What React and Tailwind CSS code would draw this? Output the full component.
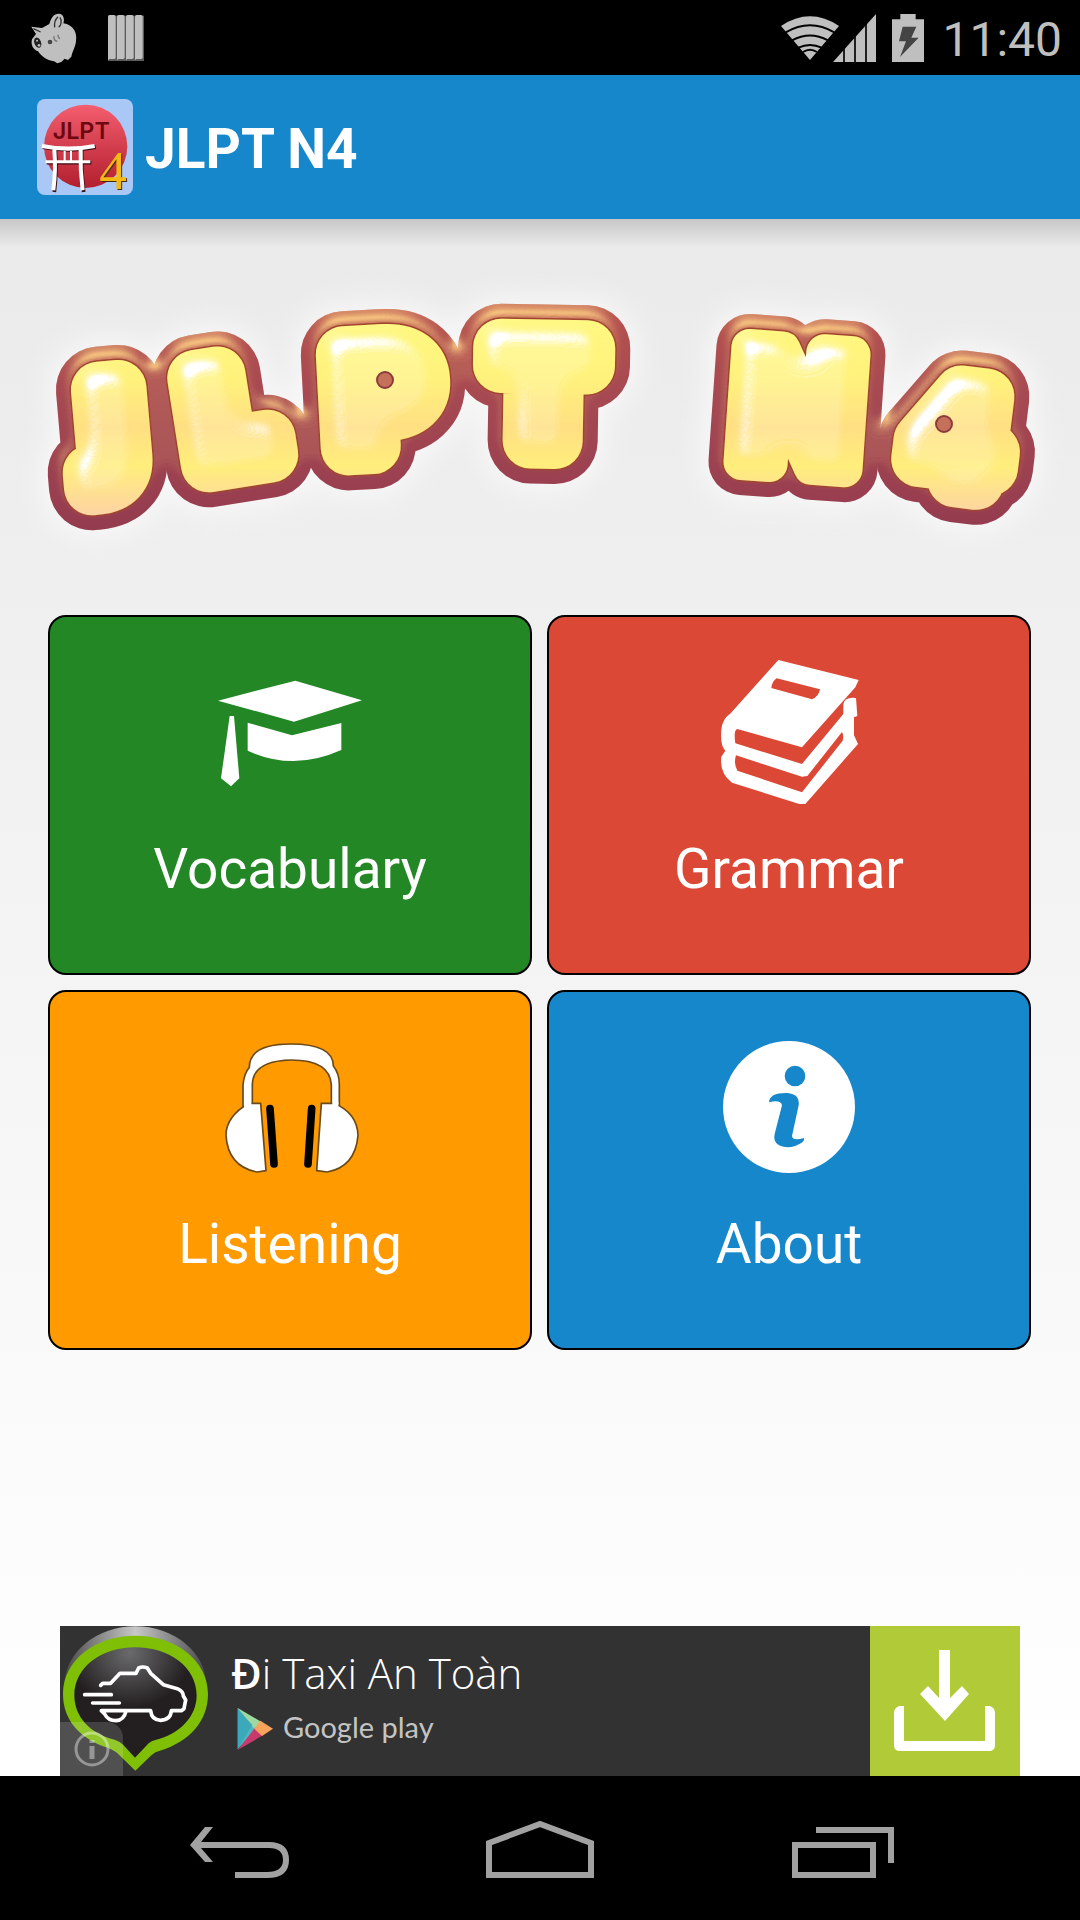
const StatusBar = () => (
  <div className="flex items-center h-[75px] px-[18px] bg-black text-[#bfbfbf]">
    <div className="flex items-center gap-[30px] pl-3">
      {/* Pig */}
      <svg className="w-12 h-[52px]" viewBox="92 34 144 156" fill="#bfbfbf">
        <path d="M96 78 L128 82 L150 70 C156 50 164 38 180 39 C194 42 196 56 192 68 C222 72 234 96 230 122 C228 140 220 150 216 168 L206 178 L196 174 L186 184 L174 188 L164 182 C142 180 126 166 116 152 C100 146 94 132 98 116 L110 100 Z" />
        <path d="M176 48 C168 56 164 68 166 80 M182 50 C188 60 186 74 178 80 M102 84 L124 94" fill="none" stroke="#333" strokeWidth="4" />
        <ellipse cx="115" cy="126" rx="10" ry="16" fill="#222" transform="rotate(-20 115 126)" />
        <circle cx="113" cy="120" r="3" />
        <circle cx="119" cy="134" r="4" />
        <circle cx="152" cy="124" r="7" fill="#444" />
        <path d="M164 106 Q162 120 174 122 M176 102 Q176 112 182 114" fill="none" stroke="#777" strokeWidth="4" />
      </svg>
      {/* Bars */}
      <svg className="w-9 h-[46px]" viewBox="324 45 108 138">
        {[324, 351, 378, 405].map((x) => (
          <g key={x}>
            <rect x={x} y="47" width="27" height="136" fill="#5c5c5c" />
            <rect x={x} y="45" width="23" height="132" rx="5" fill="#bfbfbf" />
            <path d={`M${x} 60V181L${x + 6} 175H${x + 20}V60Z`} fill="#bfbfbf" />
          </g>
        ))}
      </svg>
    </div>
    <div className="flex items-center ml-auto">
      {/* Wifi */}
      <svg className="w-[58px] h-11" viewBox="62 43 174 132">
        <path d="M149 175 L62 73 Q149 15 236 73 Z" fill="#bfbfbf" />
        <path d="M76 92 Q149 49 222 92 M95 116 Q149 87 203 116 M114 138 Q149 122 184 138 M128 151 Q149 137 170 151" fill="none" stroke="#000" strokeWidth="6" />
      </svg>
      {/* Signal */}
      <svg className="w-[43px] h-12 -ml-[6px]" viewBox="219 36 129 144">
        <path d="M219 180 L348 36 V180Z" fill="#bfbfbf" />
        <path d="M252 130V180M285 90V180M318 50V180" stroke="#000" strokeWidth="5" />
      </svg>
      {/* Battery */}
      <svg className="w-8 h-12 ml-4" viewBox="396 36 96 144">
        <path d="M421 36H467V52H492V180H396V52H421Z" fill="#bfbfbf" />
        <path d="M428 74H469L454 107H476L420 165L438 118H417Z" fill="#444" />
      </svg>
      <span className="ml-[18px] pt-1 text-[48px] leading-none">11:40</span>
    </div>
  </div>
);

const AppIcon = () => (
  <svg className="size-24 overflow-visible" viewBox="111 297 288 288">
    <defs>
      <linearGradient id="sun" x1="0" y1="0" x2="0" y2="1">
        <stop offset="0" stopColor="#f45e6e" />
        <stop offset="1" stopColor="#b21f2f" />
      </linearGradient>
    </defs>
    <rect x="111" y="297" width="288" height="288" rx="24" fill="#aac8f6" />
    <circle cx="257" cy="439" r="125" fill="url(#sun)" />
    <text x="158" y="418" fontFamily="Inter, sans-serif" fontWeight="600" fontSize="70" fill="#6d0812">JLPT</text>
    <g fill="none" stroke="#3b0a12" transform="translate(3 3)">
      <path d="M126 438 Q205 454 284 438" strokeWidth="13" />
      <path d="M137 485H271M163 448Q168 510 160 573M242 448Q240 510 248 573" strokeWidth="11" />
    </g>
    <g fill="none" stroke="#fff">
      <path d="M126 438 Q205 454 284 438" strokeWidth="13" />
      <path d="M137 485H271" strokeWidth="9" />
      <path d="M163 448Q168 510 160 571M242 448Q240 510 248 571" strokeWidth="12" />
      <path d="M194 453V485M213 453V485" strokeWidth="6" />
    </g>
    <g fontFamily="'Liberation Serif', serif" fontSize="166">
      <text x="301" y="571" fill="#4b2a10" aria-hidden="true">4</text>
      <text x="298" y="568" fill="#f5b914">4</text>
    </g>
  </svg>
);

// Bubble lettering, the same word stacked as glow, rim and body.
// --w is the stroke of each layer, the N takes a thinner one so its notches stay open.
const Logo = () => (
  <svg className="block w-full" viewBox="0 219 1080 396" fontFamily="'DejaVu Sans', sans-serif" fontWeight="bold" strokeLinejoin="round">
    <defs>
      <text id="word">
        <tspan x="96" y="466" rotate="-5" fontSize="104">J</tspan>
        <tspan x="198" y="466" rotate="-9" fontSize="120">L</tspan>
        <tspan x="337" y="448" rotate="-3" fontSize="128">P</tspan>
        <tspan x="499" y="440" rotate="1" fontSize="128">T</tspan>
        <tspan className="[stroke-width:calc(var(--w)-20px)]" x="727" y="461" rotate="4" fontSize="158">N</tspan>
        <tspan x="912" y="474" rotate="7" fontSize="118">4</tspan>
      </text>
      <linearGradient id="rim" gradientUnits="userSpaceOnUse" x1="0" y1="300" x2="0" y2="530">
        <stop offset="0" stopColor="#b8534e" />
        <stop offset="0.45" stopColor="#a54852" />
        <stop offset="1" stopColor="#943b4f" />
      </linearGradient>
      <linearGradient id="body" gradientUnits="userSpaceOnUse" x1="0" y1="320" x2="0" y2="515">
        <stop offset="0" stopColor="#fff880" />
        <stop offset="0.3" stopColor="#fff27c" />
        <stop offset="0.55" stopColor="#ffdf82" />
        <stop offset="0.75" stopColor="#ffee7c" />
        <stop offset="1" stopColor="#fdd3a4" />
      </linearGradient>
      <filter id="glow" filterUnits="userSpaceOnUse" x="0" y="219" width="1080" height="396">
        <feGaussianBlur stdDeviation="14" />
      </filter>
      <filter id="rimLight" filterUnits="userSpaceOnUse" x="0" y="219" width="1080" height="396" colorInterpolationFilters="sRGB">
        <feGaussianBlur in="SourceAlpha" stdDeviation="7" result="b" />
        <feSpecularLighting in="b" surfaceScale="9" specularConstant="0.85" specularExponent="14" lightingColor="#ffd285" result="s">
          <feDistantLight azimuth="262" elevation="32" />
        </feSpecularLighting>
        <feComposite in="s" in2="SourceAlpha" operator="in" result="c" />
        <feMerge>
          <feMergeNode in="SourceGraphic" />
          <feMergeNode in="c" />
        </feMerge>
      </filter>
      <filter id="bodyLight" filterUnits="userSpaceOnUse" x="0" y="219" width="1080" height="396" colorInterpolationFilters="sRGB">
        <feGaussianBlur in="SourceAlpha" stdDeviation="11" result="b" />
        <feSpecularLighting in="b" surfaceScale="22" specularConstant="1.7" specularExponent="18" lightingColor="#ffffff" result="s">
          <feDistantLight azimuth="235" elevation="34" />
        </feSpecularLighting>
        <feComposite in="s" in2="SourceAlpha" operator="in" result="c" />
        <feMerge>
          <feMergeNode in="SourceGraphic" />
          <feMergeNode in="c" />
        </feMerge>
      </filter>
    </defs>
    <use className="[--w:100px] [stroke-width:100px]" href="#word" fill="#fff" stroke="#fff" opacity="0.6" filter="url(#glow)" />
    <use className="[--w:86px] [stroke-width:86px]" href="#word" fill="url(#rim)" stroke="url(#rim)" filter="url(#rimLight)" />
    <use className="[--w:59px] [stroke-width:59px]" href="#word" fill="#a0452f" stroke="#a0452f" />
    <use className="[--w:56px] [stroke-width:56px]" href="#word" fill="url(#body)" stroke="url(#body)" filter="url(#bodyLight)" />
    <circle cx="385" cy="380" r="8" fill="#c4705a" stroke="#8f3b3b" strokeWidth="2" />
    <circle cx="944" cy="424" r="8" fill="#c4705a" stroke="#8f3b3b" strokeWidth="2" />
  </svg>
);

const CapIcon = () => (
  <svg className="size-36" viewBox="114 30 432 432" fill="#fff">
    <path d="M114 152L346 92L546 151L342 215Z" />
    <path d="M203 218L336 256L484 219V300Q410 333 340 333Q270 333 203 302Z" />
    <path d="M149 198H162L178 385L153 409L123 385Z" />
  </svg>
);

const BooksIcon = () => (
  <svg className="size-36" viewBox="201 90 432 432">
    <path fill="#fff" d="M385 90L626 150L616 172L456 352L262 297Q250 300 256 340L456 402L580 252V222Q584 200 618 204L622 258L612 262V316L624 342L466 522H448L246 458Q208 430 214 380L226 362Q210 345 214 300Q216 268 242 250Z" />
    <path fill="#db4936" d="M380 145L510 178Q506 200 486 208L364 174Q366 154 380 145ZM258 376L456 440L472 438L576 306Q582 316 578 332L456 487L262 422Q250 400 258 376Z" />
  </svg>
);

const HeadphonesIcon = () => (
  <svg className="size-36" viewBox="144 75 432 432">
    <g fill="#fff" stroke="#6b4a1a" strokeWidth="5" strokeLinejoin="round">
      <path d="M219 290V225Q222 190 238 172Q238 102 362 102Q490 102 490 168Q508 190 508 225V290H484V225Q480 150 364 150Q250 152 247 222V290Z" />
      <path d="M272 280H236Q168 320 168 376Q174 470 262 486L288 482Z" />
      <path d="M454 280H492Q562 310 564 376Q556 470 472 486L440 482Z" />
    </g>
    <path d="M222 276H244V295H222ZM487 276H505V295H487Z" fill="#fff" />
    <path d="M300 296L312 462M425 296L414 462" stroke="#000" strokeWidth="23" strokeLinecap="round" />
  </svg>
);

const InfoIcon = () => (
  <svg className="size-36" viewBox="81 75 432 432">
    <circle cx="297" cy="291" r="198" fill="#fff" />
    <circle cx="315" cy="198" r="31" fill="#1787cc" />
    <path fill="#1787cc" d="M237 277Q238 248 292 249Q330 252 326 286L306 378Q308 394 342 384Q344 390 338 396Q316 412 292 412Q246 408 254 372L276 286Q272 268 237 277Z" />
  </svg>
);

const menu = [
  { label: "Vocabulary", color: "bg-[#238726]", Icon: CapIcon },
  { label: "Grammar", color: "bg-[#db4936]", Icon: BooksIcon },
  { label: "Listening", color: "bg-[#ff9a00]", Icon: HeadphonesIcon },
  { label: "About", color: "bg-[#1787cc]", Icon: InfoIcon },
];

const TaxiIcon = () => (
  <svg className="size-full" viewBox="60 48 450 450">
    <defs>
      <linearGradient id="shine">
        <stop offset="0" stopColor="#4a4a4a" />
        <stop offset="0.5" stopColor="#c8c8c8" />
        <stop offset="1" stopColor="#4a4a4a" />
      </linearGradient>
      <radialGradient id="disc" cx="0.45" cy="0.05" r="0.5">
        <stop offset="0" stopColor="#6a6a6c" />
        <stop offset="1" stopColor="#231f20" />
      </radialGradient>
    </defs>
    <ellipse cx="286" cy="224" rx="212" ry="175" fill="url(#shine)" />
    <path d="M286 482L240 437Q228 424 205 414C120 388 69 330 69 252C69 150 166 77 286 77C406 77 504 150 504 252C504 335 446 396 360 422Q346 424 334 436Z" fill="#7fbf06" />
    <path d="M285 443L250 405Q240 394 224 389C150 372 103 320 103 256C103 172 184 112 286 112C388 112 470 172 470 256C470 320 420 372 346 390Q334 392 326 400Z" fill="url(#disc)" />
    <g fill="none" stroke="#fff" strokeWidth="11" strokeLinejoin="round" strokeLinecap="round">
      <path d="M182 226L188 220H212L240 190H288L296 174Q308 168 322 174L332 190L370 224L412 236Q430 244 430 258L437 270L432 296L424 302H394Q392 330 362 331Q334 330 332 302H184L194 312Q204 332 228 332Q252 330 258 304" />
      <path d="M134 254H214M158 279H238" />
    </g>
  </svg>
);

const AdBanner = () => (
  <a href="#install" className="flex h-[150px] mx-[60px] bg-[#323232] text-white">
    <div className="relative w-[150px]">
      <TaxiIcon />
      <div className="absolute left-0 bottom-0 w-[63px] h-[54px] rounded-tr-2xl bg-white/15 flex items-center justify-center">
        <svg className="size-9" viewBox="0 0 36 36" fill="none" stroke="#fff" strokeOpacity="0.4">
          <circle cx="18" cy="18" r="16" strokeWidth="3" />
          <path d="M18 9V12M18 15V28" strokeWidth="5" />
        </svg>
      </div>
    </div>
    <div className="flex-1 pl-[21px] pt-[19px]">
      <div className="font-['Open_Sans',sans-serif] font-light text-[42px] leading-[56px]">
        <span className="font-semibold">Đ</span>i Taxi An Toàn
      </div>
      <div className="flex items-center gap-[10px] pt-[7px] pl-[6px]">
        <svg className="w-9 h-[42px]" viewBox="590 292 108 126">
          <path d="M592 292V416L650 354Z" fill="#4cb8c4" />
          <path d="M592 292L665 335L645 358Z" fill="#9fd8a0" />
          <path d="M592 296L636 342L592 416Z" fill="#35a3b5" opacity="0.7" />
          <path d="M592 418L645 350L668 374Z" fill="#c83a6e" />
          <path d="M660 330L698 354L665 376L642 354Z" fill="#f6a45c" />
        </svg>
        <span className="pb-1 font-[Lato,sans-serif] text-[29px] leading-9 text-[#c4c4c4]">Google play</span>
      </div>
    </div>
    <svg className="w-[150px] bg-[#b1cb38]" viewBox="0 0 150 150" fill="#fff">
      <path d="M69 24H80V72L92 60L99 68L75 95L50 68L58 60L69 72Z" />
      <path d="M29 80H34V115H115V80H120Q125 82 125 87V119Q125 125 119 125H30Q24 125 24 119V87Q24 82 29 80Z" />
    </svg>
  </a>
);

const NavBar = () => (
  <nav className="flex justify-center h-36 pt-[2px] bg-black">
    <button aria-label="Back" className="w-[302px] pl-[2px] flex items-center justify-center">
      <svg className="w-[99px] h-[57px]" viewBox="190 1821 99 57" fill="#a1a1a1">
        <path d="M190 1845L205 1827H213L201 1842H269Q289 1842 289 1860Q289 1878 267 1878H235V1872H267Q283 1872 283 1860Q283 1848 269 1848H201L213 1862H205Z" />
      </svg>
    </button>
    <button aria-label="Home" className="w-[302px] flex items-center justify-center">
      <svg className="w-[108px] h-[57px]" viewBox="486 1821 108 57">
        <path d="M489 1875V1843L540 1824L591 1843V1875Z" fill="none" stroke="#a1a1a1" strokeWidth="6" />
      </svg>
    </button>
    <button aria-label="Recent apps" className="w-[302px] pl-[2px] flex items-center justify-center">
      <svg className="w-[102px] h-[57px]" viewBox="792 1821 102 57" fill="none" stroke="#a1a1a1" strokeWidth="6">
        <path d="M795 1845H873V1875H795ZM816 1830H891V1863" />
      </svg>
    </button>
  </nav>
);

export default function App() {
  return (
    <div className="min-h-screen flex flex-col font-[Roboto,sans-serif]">
      <StatusBar />

      <header className="flex items-center gap-3 h-36 px-[37px] bg-[#1787cc] text-white">
        <AppIcon />
        <h1 className="pt-1 text-[55px] leading-none font-bold">JLPT N4</h1>
      </header>

      <main className="flex-1 flex flex-col bg-[linear-gradient(to_bottom,rgba(0,0,0,0.15),rgba(0,0,0,0)_28px),linear-gradient(to_bottom,#eaeaea,#ffffff)]">
        <Logo />

        {/* Menu */}
        <div className="grid grid-cols-2 gap-[15px] pl-12 pr-[49px]">
          {menu.map(({ label, color, Icon }) => (
            <button
              key={label}
              className={`flex flex-col items-center h-[360px] pt-[43px] border-2 border-black rounded-[18px] text-white cursor-pointer ${color}`}
            >
              <Icon />
              <span className="mt-[33px] text-[55px] leading-[64px]">{label}</span>
            </button>
          ))}
        </div>

        <div className="mt-auto pt-8">
          <AdBanner />
        </div>
      </main>

      <NavBar />
    </div>
  );
}
